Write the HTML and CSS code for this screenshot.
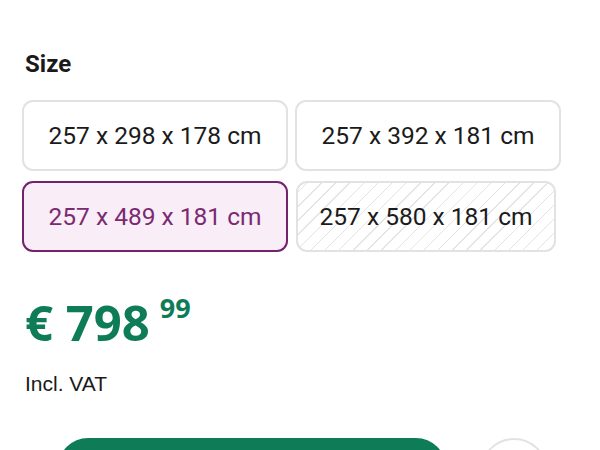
FILE: index.html
```html
<!DOCTYPE html>
<html>
<head>
<meta charset="utf-8">
<link rel="stylesheet" href="styles.css">
</head>
<body>
<div class="page">
  <h2 class="label">Size</h2>
  <div class="options">
    <div class="opt">257 x 298 x 178 cm</div>
    <div class="opt">257 x 392 x 181 cm</div>
    <div class="opt selected">257 x 489 x 181 cm</div>
    <div class="opt unavailable">257 x 580 x 181 cm</div>
  </div>
  <div class="price"><span class="euro">€ 798</span><sup class="cents">99</sup></div>
  <div class="vat">Incl. VAT</div>
  <div class="actions">
    <div class="cart"></div>
    <div class="fav"></div>
  </div>
</div>
</body>
</html>
```
FILE: styles.css
```css
html, body { margin: 0; padding: 0; background: #fff; overflow: hidden; }
.page { padding: 49px 0 0 22px; width: 540px; height: 401px; overflow: hidden; }
.label {
  margin: 0 0 0 3px;
  font-family: Roboto, sans-serif;
  font-weight: 700;
  font-size: 24px;
  line-height: 30px;
  color: #1a1a1a;
}
.options {
  margin-top: 21px;
  display: grid;
  grid-template-columns: 266px 266px;
  column-gap: 7px;
  row-gap: 10px;
}
.opt {
  box-sizing: border-box;
  height: 71px;
  border: 2px solid #e2e2e2;
  border-radius: 11px;
  display: flex;
  align-items: center;
  justify-content: center;
  font-family: Roboto, sans-serif;
  font-size: 24.5px;
  color: #1b1b1b;
  background: #fff;
}
.opt.selected {
  border: 2.5px solid #74226c;
  background: #f9eef7;
  color: #7b2a72;
}
.opt.unavailable {
  width: 260px;
  margin-left: 1px;
  background: repeating-linear-gradient(135deg, #fff 0 6px, #e4e4e4 6px 7px, #fff 7px 10px);
}
.price {
  margin: 40px 0 0 3px;
  color: #0e7c56;
  font-family: "Open Sans", sans-serif;
  font-weight: 700;
  display: flex;
  align-items: flex-start;
  height: 60px;
}
.euro { font-size: 49px; line-height: 60px; }
.cents { font-size: 27px; line-height: 28px; margin-left: 10px; position: relative; top: 2px; }
.vat {
  margin: 20px 0 0 3px;
  font-family: "Liberation Sans", Arial, sans-serif;
  font-size: 21px;
  line-height: 24px;
  color: #1a1a1a;
}
.actions {
  margin-top: 42px;
  display: flex;
  gap: 34px;
  padding-left: 36px;
}
.cart {
  width: 388px;
  height: 60px;
  flex: none;
  border-radius: 30px;
  background: #0e7c56;
}
.fav {
  width: 68px;
  height: 68px;
  flex: none;
  box-sizing: border-box;
  border: 2px solid #e2e2e2;
  border-radius: 50%;
}
```
